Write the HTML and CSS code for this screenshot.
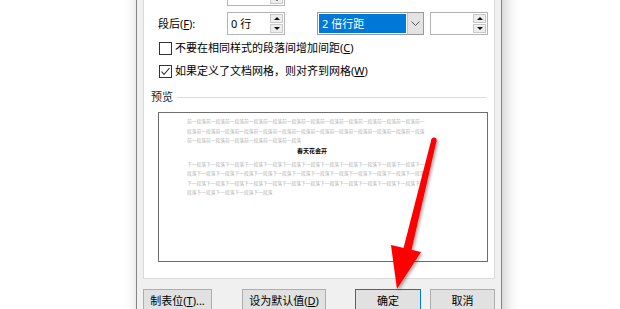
FILE: index.html
```html
<!DOCTYPE html>
<html lang="zh-CN">
<head>
  <meta charset="UTF-8" />
  <meta name="viewport" content="width=device-width, initial-scale=1" />
  <title>段落</title>
  <link rel="stylesheet" href="styles.css">
</head>
<body>

<div class="dialog">
  <div class="tabpage">
    <div class="row">
      <span class="label label-low">段前(<u>B</u>):</span>
      <div class="spinbox">
        <span class="value">0 行</span>
        <div class="spin"><span class="up"></span><span class="down"></span></div>
      </div>
      <span class="label label-combo label-low">行距(<u>N</u>):</span>
      <span class="label label-at label-low">设置值(<u>A</u>):</span>
    </div>

    <div class="row">
      <span class="label">段后(<u>F</u>):</span>
      <div class="spinbox">
        <span class="value">0 行</span>
        <div class="spin"><span class="up"></span><span class="down"></span></div>
      </div>
      <div class="combo">
        <span class="selected">2 倍行距</span>
        <span class="drop">
          <svg width="9" height="5" viewBox="0 0 9 5"><polyline points="0.5,0.5 4.5,4.5 8.5,0.5" fill="none" stroke="#555" stroke-width="1"/></svg>
        </span>
      </div>
      <div class="spinbox spinbox-at">
        <span class="value"></span>
        <div class="spin"><span class="up"></span><span class="down"></span></div>
      </div>
    </div>

    <label class="check">
      <span class="box"></span>
      <span>不要在相同样式的段落间增加间距(<u>C</u>)</span>
    </label>
    <label class="check">
      <span class="box">
        <svg width="11" height="11" viewBox="0 0 11 11"><polyline points="1.5,5.5 4,8.5 9.5,2" fill="none" stroke="#222" stroke-width="1.1"/></svg>
      </span>
      <span>如果定义了文档网格，则对齐到网格(<u>W</u>)</span>
    </label>

    <div class="group-title"><span>预览</span></div>
    <div class="preview">
      <p class="para-other">前一段落前一段落前一段落前一段落前一段落前一段落前一段落前一段落前一段落前一段落前一段落前一段落前一段落前一段落前一段落前一段落前一段落前一段落前一段落前一段落前一段落前一段落前一段落前一段落前一段落前一段落前一段落前一段落前一段落前一段落前一段落</p>
      <p class="para-current">春天花会开</p>
      <p class="para-other">下一段落下一段落下一段落下一段落下一段落下一段落下一段落下一段落下一段落下一段落下一段落下一段落下一段落下一段落下一段落下一段落下一段落下一段落下一段落下一段落下一段落下一段落下一段落下一段落下一段落下一段落下一段落下一段落下一段落下一段落下一段落下一段落下一段落下一段落下一段落下一段落下一段落下一段落下一段落下一段落下一段落下一段落</p>
    </div>
  </div>

  <div class="buttons">
    <button class="btn btn-tabs">制表位(<u>T</u>)...</button>
    <button class="btn btn-default">设为默认值(<u>D</u>)</button>
    <button class="btn btn-ok">确定</button>
    <button class="btn btn-cancel">取消</button>
  </div>
</div>

<!-- red annotation arrow on top of the screenshot -->
<svg class="arrow" width="620" height="309" viewBox="0 0 620 309">
  <defs>
    <filter id="shade" x="-30%" y="-10%" width="160%" height="120%">
      <feDropShadow dx="1.5" dy="2" stdDeviation="1.6" flood-color="#000" flood-opacity="0.35"/>
    </filter>
  </defs>
  <g filter="url(#shade)" fill="#ff0000">
    <polygon points="431.5,139 436.5,141 411,252 403,250"/>
    <circle cx="434" cy="140" r="2.6"/>
    <polygon points="391,245 421,252 397,289"/>
  </g>
</svg>

</body>
</html>
```

FILE: styles.css
```css
body {
  margin: 0;
  height: 309px;
  overflow: hidden;
  position: relative;
  background: #fff;
  font-family: "Noto Sans", "Noto Sans CJK SC", sans-serif;
  font-size: 11px;
  line-height: 14px;
  color: #000;
}
u {
  text-decoration-thickness: 1px;
  text-underline-offset: 1px;
}

.dialog {
  width: 352px;
  margin: -30px 0 0 136px;
  padding: 0 6px 14px;
  background: #f0f0f0;
  border-left: 1px solid #858585;
  border-right: 1px solid #858585;
  box-shadow: 3px 0 14px rgba(0, 0, 0, 0.22);
}
.tabpage {
  background: #fff;
  border: 1px solid #d9d9d9;
  border-top: none;
  padding: 13px 0 16px 14px;
}

/* spacing rows */
.row {
  display: flex;
  align-items: center;
  height: 23px;
  margin-bottom: 6px;
}
.label {
  width: 69px;
  flex-shrink: 0;
}
.label-low {
  align-self: flex-end;
  margin-bottom: 5px;
}
.label-combo {
  width: 107px;
  margin-left: 32px;
}
.label-at {
  width: 58px;
  margin-left: 6px;
}
.spinbox {
  width: 58px;
  height: 23px;
  box-sizing: border-box;
  border: 1px solid #b4b4b4;
  background: #fff;
  display: flex;
}
.spinbox-at {
  margin-left: 6px;
}
.value {
  flex: 1;
  padding-left: 3px;
  line-height: 21px;
}
.spin {
  width: 14px;
  box-sizing: border-box;
  padding: 1px 1px 1px 0;
  display: flex;
  flex-direction: column;
  gap: 1px;
}
.spin span {
  flex: 1;
  background: #ededed;
  border: 1px solid #c9c9c9;
  display: flex;
  align-items: center;
  justify-content: center;
}
.spin .up::before,
.spin .down::before {
  content: "";
  border-left: 3px solid transparent;
  border-right: 3px solid transparent;
}
.spin .up::before {
  border-bottom: 3px solid #111;
}
.spin .down::before {
  border-top: 3px solid #111;
}

.combo {
  width: 107px;
  height: 23px;
  margin-left: 32px;
  box-sizing: border-box;
  border: 1px solid #9a9a9a;
  background: #fff;
  display: flex;
}
.selected {
  flex: 1;
  margin: 1px;
  padding-left: 3px;
  background: #0078d7;
  color: #fff;
  line-height: 19px;
}
.drop {
  width: 15px;
  background: #e3e3e3;
  border-left: 1px solid #c4c4c4;
  display: flex;
  align-items: center;
  justify-content: center;
}

/* checkboxes */
.check {
  display: flex;
  align-items: center;
  gap: 3px;
  height: 14px;
  margin: 0 0 9px 1px;
}
.box {
  width: 13px;
  height: 13px;
  box-sizing: border-box;
  border: 1px solid #333;
  background: #fff;
  display: flex;
  align-items: center;
  justify-content: center;
}

/* preview */
.group-title {
  display: flex;
  align-items: center;
  gap: 4px;
  width: 336px;
  height: 20px;
  margin: 0 0 5px -7px;
  color: #1e1e1e;
}
.group-title::after {
  content: "";
  flex: 1;
  height: 1px;
  background: #dcdcdc;
}
.preview {
  width: 330px;
  height: 150px;
  box-sizing: border-box;
  border: 1px solid #6e6e6e;
  background: #fff;
  padding: 4px 0 0 28px;
}
.preview p {
  margin: 0;
  width: 240px;
}
.para-other {
  color: #b3b3b3;
  font-size: 4.75px;
  line-height: 9.5px;
}
.para-current {
  font-size: 6px;
  line-height: 9px;
  font-weight: bold;
  text-align: center;
  padding-left: 10px;
  box-sizing: border-box;
  margin: 1px 0 4px !important;
}

/* bottom buttons */
.buttons {
  display: flex;
  margin-top: 10px;
}
.btn {
  height: 23px;
  padding: 0;
  font: inherit;
  color: #000;
  background: #e1e1e1;
  border: 1px solid #adadad;
}
.btn-tabs { width: 69px; }
.btn-default { width: 84px; margin-left: 30px; }
.btn-ok { width: 66px; margin-left: 29px; border-color: #0078d7; }
.btn-cancel { width: 65px; margin-left: 9px; }

.arrow {
  position: absolute;
  left: 0;
  top: 0;
  pointer-events: none;
}
```
